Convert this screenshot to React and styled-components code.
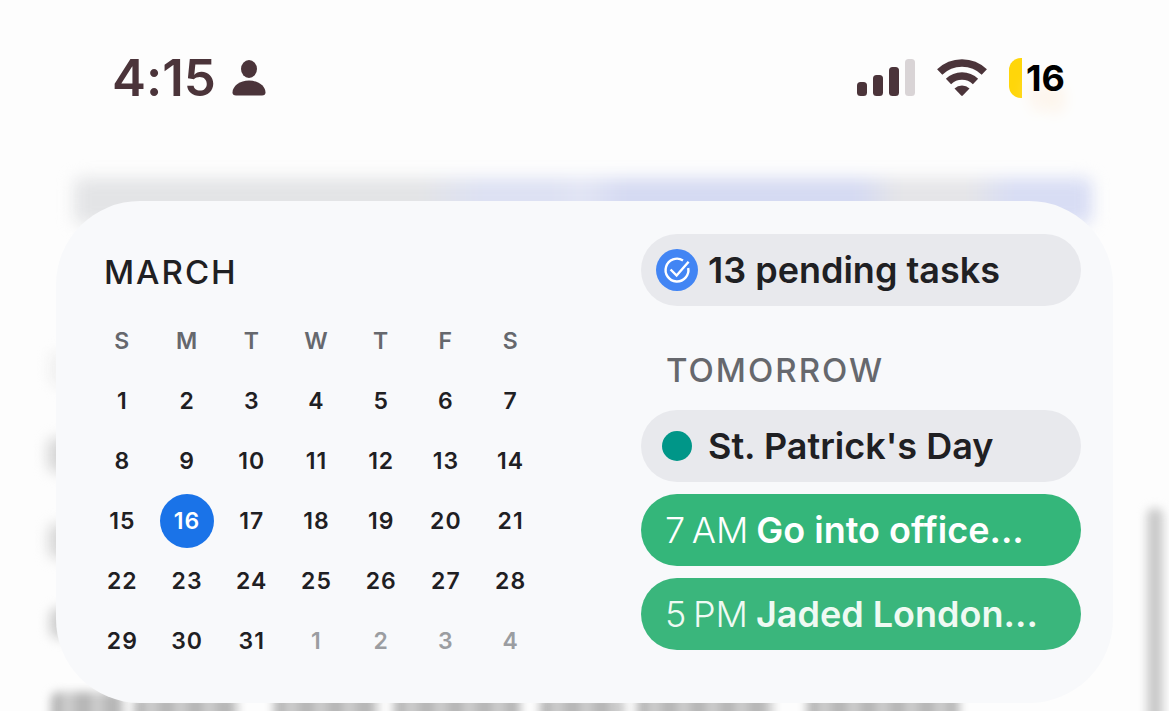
import React from 'react';
import styled, { createGlobalStyle } from 'styled-components';

const GlobalStyle = createGlobalStyle`
  * {
    box-sizing: border-box;
  }
  body {
    margin: 0;
    background: #fdfdfd;
    font-family: Inter, 'Liberation Sans', sans-serif;
    font-variant-ligatures: none;
    color: #1f2023;
  }
`;

const weekdays = ['Sunday', 'Monday', 'Tuesday', 'Wednesday', 'Thursday', 'Friday', 'Saturday'];

const weeks = [0, 1, 2, 3, 4].map((w) =>
  weekdays.map((_, d) => {
    const n = w * 7 + d + 1;
    return { day: n > 31 ? n - 31 : n, muted: n > 31, today: n === 16 };
  })
);

const events = [
  { time: '7\u2009AM', title: 'Go into office...' },
  { time: '5\u2009PM', title: 'Jaded London...', past: true },
];

const banner =
  'linear-gradient(90deg, #e3e4e6 0 34%, #dde1f3 40% 47%, #e2e5f4 50%, #d5daf2 54% 77%, #e5e5e8 81% 88%, #d8ddf4 92%)';
const words =
  'repeating-linear-gradient(90deg, #b4b4b4 0 9px, #cecece 13px 20px, #bdbdbd 24px 29px)';

const smudges = [
  { left: 74, top: 178, width: 1018, height: 46, fill: banner, blur: 8 },
  { left: 50, top: 352, width: 30, height: 34, fill: '#efefef', blur: 7 },
  { left: 48, top: 438, width: 30, height: 34, fill: '#d4d4d4', blur: 7 },
  { left: 49, top: 524, width: 30, height: 34, fill: '#d4d4d4', blur: 7 },
  { left: 50, top: 608, width: 30, height: 30, fill: '#cccccc', blur: 6 },
  { left: 1147, top: 508, width: 16, height: 240, fill: '#c9c9c9', blur: 5 },
  { left: 51, top: 692, width: 73, height: 40, fill: words, blur: 5 },
  { left: 134, top: 695, width: 104, height: 40, fill: words, blur: 5 },
  { left: 274, top: 692, width: 104, height: 40, fill: words, blur: 5 },
  { left: 394, top: 692, width: 126, height: 40, fill: words, blur: 5 },
  { left: 540, top: 695, width: 84, height: 40, fill: words, blur: 5 },
  { left: 637, top: 692, width: 136, height: 40, fill: words, blur: 5 },
  { left: 807, top: 692, width: 152, height: 40, fill: words, blur: 5 },
];

const Page = styled.div`
  position: relative;
  min-height: 100vh;
  overflow: hidden;
`;

const Backdrop = styled.div`
  position: absolute;
  inset: 0;
  overflow: hidden;
`;

const Smudge = styled.div`
  position: absolute;
  left: ${({ box }) => box.left}px;
  top: ${({ box }) => box.top}px;
  width: ${({ box }) => box.width}px;
  height: ${({ box }) => box.height}px;
  border-radius: 8px;
  background: ${({ box }) => box.fill};
  filter: blur(${({ box }) => box.blur}px);
`;

const StatusBar = styled.header`
  position: relative;
  display: flex;
  align-items: center;
  justify-content: space-between;
  height: 155px;
  padding: 0 104px 0 112px;
  color: #4b343a;
`;

const StatusGroup = styled.div`
  display: flex;
  align-items: center;
  gap: ${({ gap }) => gap}px;
`;

const Clock = styled.time`
  font-size: 51px;
  line-height: 60px;
  font-weight: 600;
`;

const Battery = styled.div`
  display: flex;
  align-items: center;
  gap: 4px;
  color: #000;
  font-size: 36px;
  line-height: 40px;
  font-weight: 700;
  text-shadow: 0 20px 16px #fdeedd;
`;

const Charge = styled.span`
  width: 13px;
  height: 40px;
  border-radius: 12px 0 0 12px;
  background: #ffd60a;
`;

const Widget = styled.main`
  position: relative;
  display: grid;
  grid-template-columns: 453fr 440fr;
  gap: 98px;
  margin: 46px 56px 0;
  padding: 33px 32px 32px 34px;
  border-radius: 84px;
  background: #f8f9fb;
`;

const Heading = styled.h2`
  margin: 0;
  font-size: 33px;
  line-height: 40px;
  font-weight: 500;
  letter-spacing: 2px;
`;

const Month = styled(Heading)`
  padding: 18px 0 19px 14px;
`;

const AgendaTitle = styled(Heading)`
  padding: 32px 0 8px 25px;
  color: #66686d;
`;

const Calendar = styled.table`
  width: 100%;
  table-layout: fixed;
  border-collapse: collapse;
`;

const Cell = styled.td`
  height: 60px;
  padding: 0;
  text-align: center;
  font-size: 23px;
  font-weight: 600;
  letter-spacing: 1px;
  color: ${({ muted }) => (muted ? '#9b9da1' : '#1f2023')};
`;

const Weekday = styled(Cell)`
  color: #66686d;
`;

const Today = styled.span`
  display: inline-flex;
  align-items: center;
  justify-content: center;
  width: 54px;
  height: 54px;
  border-radius: 50%;
  background: #1a73e8;
  color: #fff;
  vertical-align: middle;
`;

const Agenda = styled.section`
  display: flex;
  flex-direction: column;
  gap: 12px;
  min-width: 0;
`;

const Pill = styled.a`
  display: flex;
  align-items: center;
  gap: ${({ gap = 8 }) => gap}px;
  height: 72px;
  padding: 0 ${({ inset = 24 }) => inset}px;
  border-radius: 36px;
  background: ${({ bg = '#e8e9ed' }) => bg};
  color: ${({ ink = '#1f2023' }) => ink};
  font-size: 36px;
  font-weight: 600;
  white-space: nowrap;
  text-decoration: none;
`;

const Time = styled.time`
  font-weight: 300;
`;

const Dot = styled.span`
  width: 30px;
  height: 30px;
  border-radius: 50%;
  background: #009688;
`;

const PersonIcon = () => (
  <svg width="34" height="37" viewBox="0 0 34 37" fill="currentColor" aria-hidden="true">
    <ellipse cx="17" cy="10" rx="8" ry="9" />
    <path d="M17 21.500c9 0 16.500 5.500 16.500 12 0 2-1.200 3-3.500 3H4c-2.300 0-3.500-1-3.500-3C.5 27 8 21.500 17 21.500z" />
  </svg>
);

const SignalIcon = () => (
  <svg width="58" height="38" viewBox="0 0 58 38" fill="currentColor" aria-hidden="true">
    <rect x="0" y="23" width="10" height="14" rx="3.500" />
    <rect x="16" y="16" width="10" height="21" rx="3.500" />
    <rect x="32" y="8" width="10" height="29" rx="3.500" />
    <rect x="48" y="0" width="10" height="37" rx="3.500" fill="#d9d4d6" />
  </svg>
);

const WifiIcon = () => (
  <svg width="50" height="38" viewBox="0 0 50 38" fill="none" stroke="currentColor" strokeWidth="7.500" aria-hidden="true">
    <path d="M2.700 13a32 32 0 0 1 44.600 0" />
    <path d="M11.500 22.500a19.400 19.400 0 0 1 27 0" />
    <path d="M17.500 29.500a11 11 0 0 1 15 0L25.800 36.600q-.8.700-1.600 0z" fill="currentColor" stroke="none" />
  </svg>
);

const TasksIcon = () => (
  <svg width="42" height="42" viewBox="0 0 42 42" fill="none" aria-hidden="true">
    <circle cx="21" cy="21" r="21" fill="#4285f4" />
    <g stroke="#fff" strokeWidth="2.400">
      <path d="M27 11.400A11.400 11.400 0 1 0 32.200 19" />
      <path d="M14.600 20.500l6 6L32.600 12.800" />
    </g>
  </svg>
);

function App() {
  return (
    <Page>
      <GlobalStyle />
      <Backdrop aria-hidden="true">
        {smudges.map((box) => (
          <Smudge key={`${box.left}-${box.top}`} box={box} />
        ))}
      </Backdrop>
      <StatusBar>
        <StatusGroup gap={16}>
          <Clock>4:15</Clock>
          <PersonIcon />
        </StatusGroup>
        <StatusGroup gap={22}>
          <SignalIcon />
          <WifiIcon />
          <Battery>
            <Charge />
            16
          </Battery>
        </StatusGroup>
      </StatusBar>
      <Widget>
        <section>
          <Month>MARCH</Month>
          <Calendar>
            <thead>
              <tr>
                {weekdays.map((name) => (
                  <Weekday as="th" key={name} scope="col" abbr={name}>
                    {name[0]}
                  </Weekday>
                ))}
              </tr>
            </thead>
            <tbody>
              {weeks.map((week, i) => (
                <tr key={i}>
                  {week.map(({ day, muted, today }) => (
                    <Cell key={day} muted={muted}>
                      {today ? <Today>{day}</Today> : day}
                    </Cell>
                  ))}
                </tr>
              ))}
            </tbody>
          </Calendar>
        </section>
        <Agenda>
          <Pill href="#tasks" inset={15} gap={10}>
            <TasksIcon />
            13 pending tasks
          </Pill>
          <AgendaTitle>TOMORROW</AgendaTitle>
          <Pill href="#holiday" inset={21} gap={16}>
            <Dot />
            St. Patrick's Day
          </Pill>
          {events.map(({ time, title, past }) => (
            <Pill
              key={time}
              href="#event"
              bg={past ? '#3ab67c' : '#34b67a'}
              ink={past ? '#effaf3' : '#fff'}
            >
              <Time>{time}</Time>
              {title}
            </Pill>
          ))}
        </Agenda>
      </Widget>
    </Page>
  );
}

export default App;
